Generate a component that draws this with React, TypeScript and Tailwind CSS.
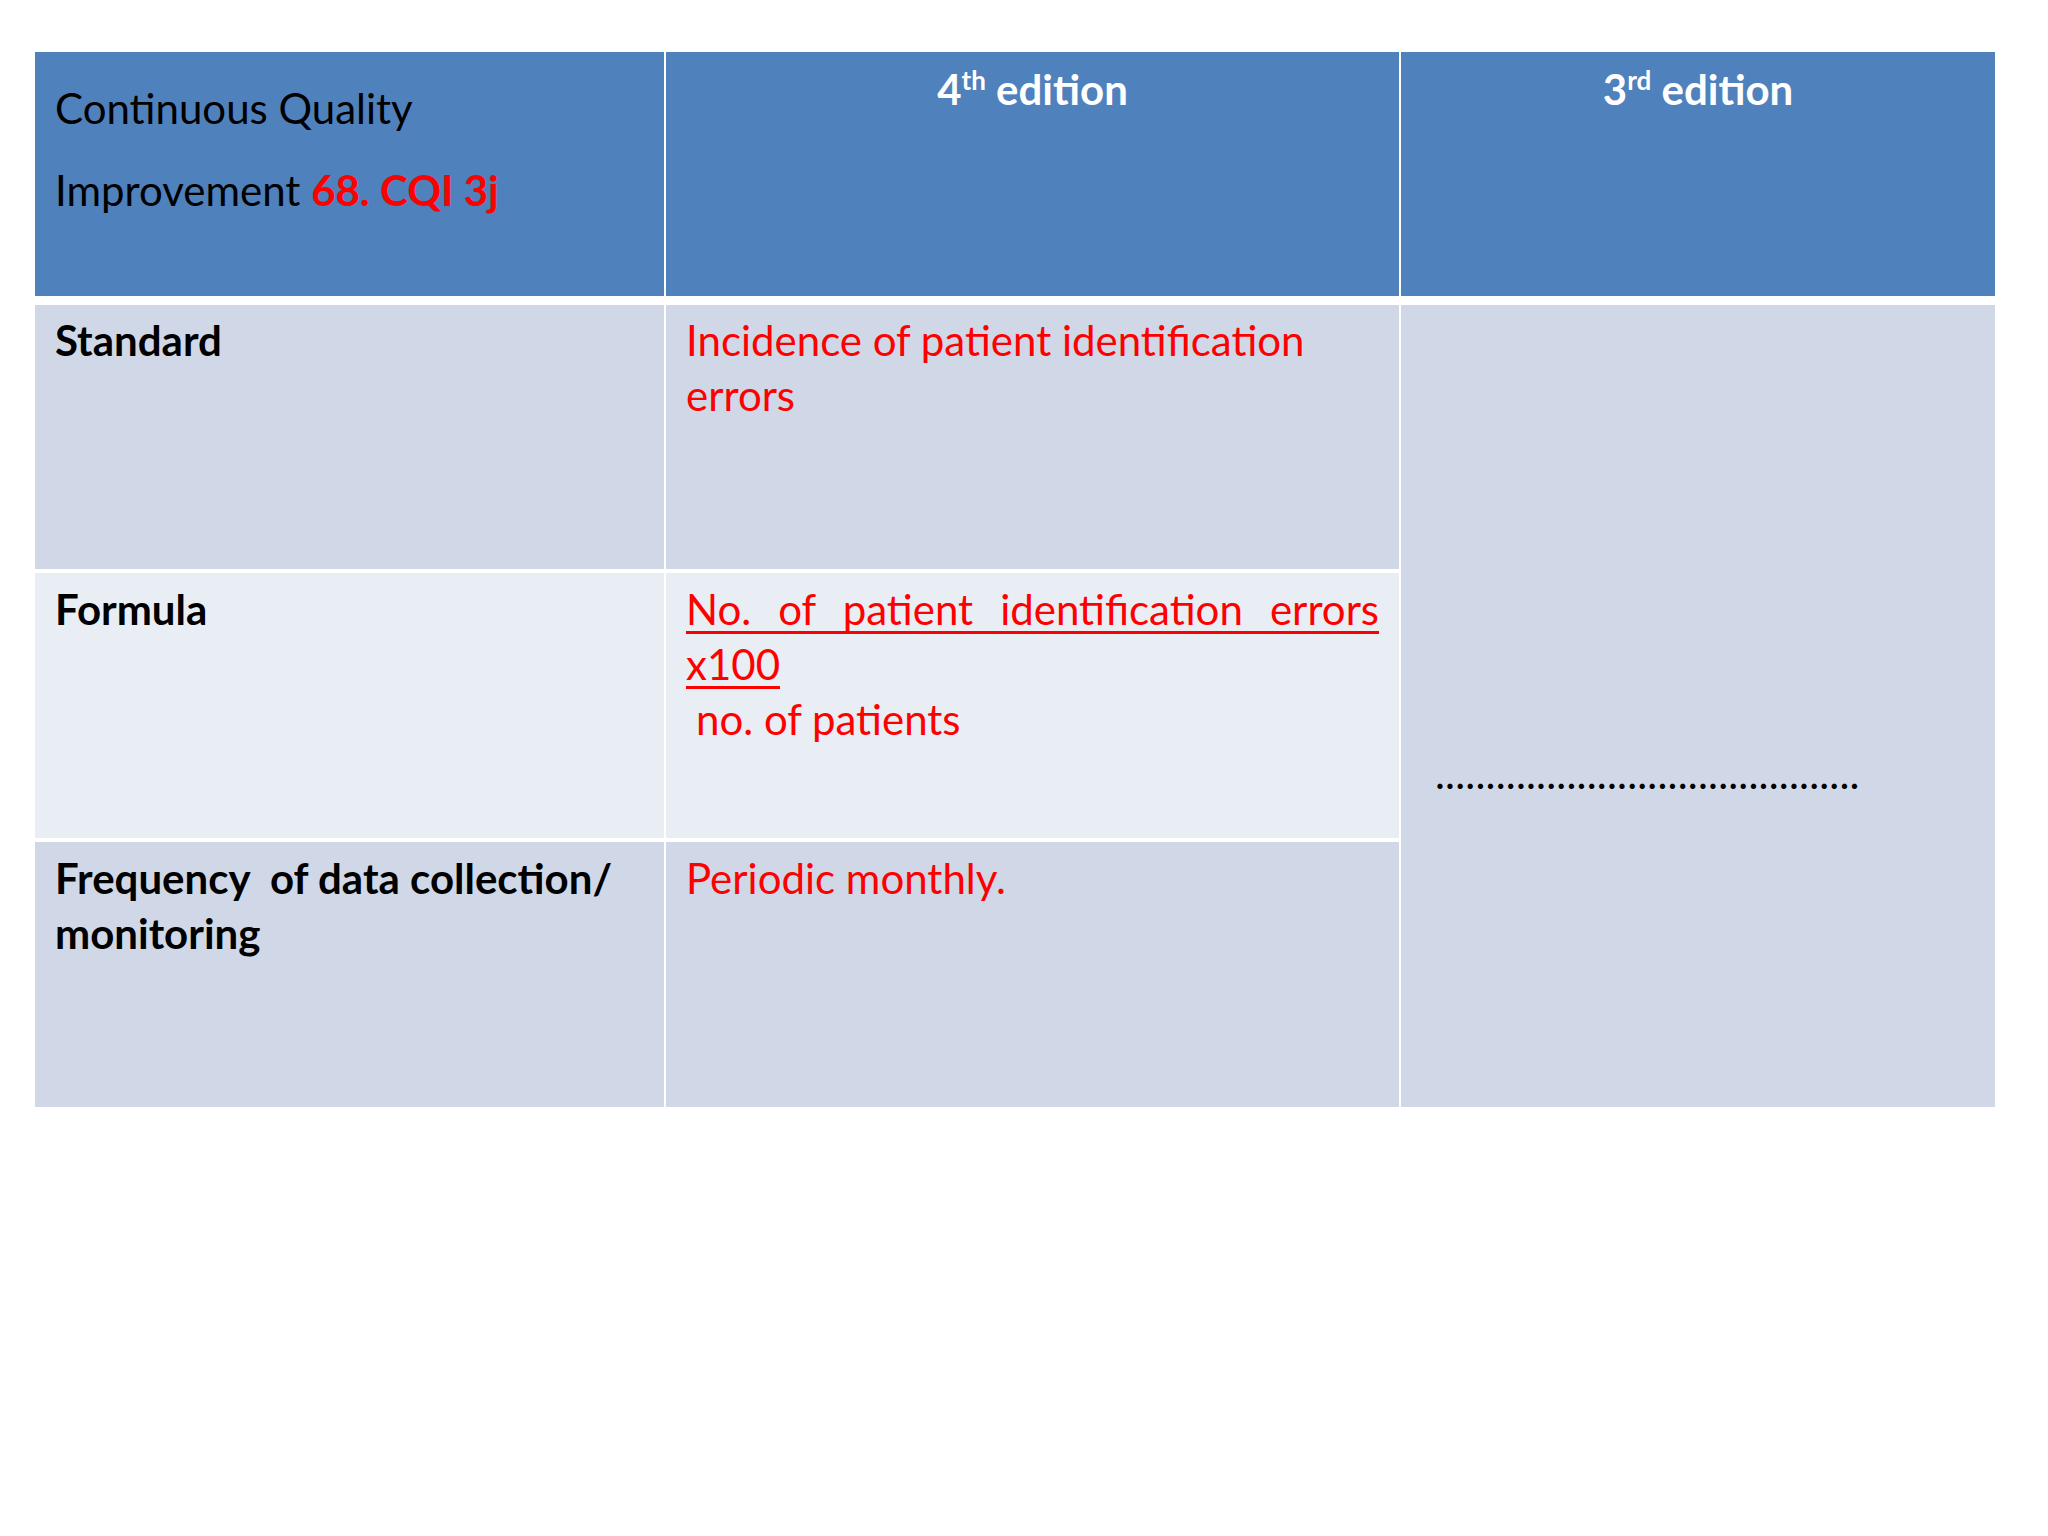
const font = { fontFamily: 'Lato, "Open Sans", sans-serif' };

const App = () => {
  return (
    <div className="w-[2048px] h-[1536px] bg-white pt-[52px] pl-[35px]" style={font}>
      <div className="w-[1960px] flex flex-col">
        {/* HEADER ROW */}
        <div className="grid grid-cols-[629px_733px_594px] gap-x-[2px] bg-white">
          <div className="h-[244px] bg-[#4f81bd] px-[20px] pt-[29px] text-[42px] leading-[55px] text-black">
            <p>Continuous Quality</p>
            <p className="mt-[27px]">
              Improvement <span className="font-bold text-[#ff0000]">68. CQI 3j</span>
            </p>
          </div>
          <div className="h-[244px] bg-[#4f81bd] px-[20px] pt-[10px] text-center text-[42px] leading-[55px] font-bold text-white">
            4<sup className="text-[26px] relative top-[-15px]">th</sup> edition
          </div>
          <div className="h-[244px] bg-[#4f81bd] px-[20px] pt-[10px] text-center text-[42px] leading-[55px] font-bold text-white">
            3<sup className="text-[26px] relative top-[-15px]">rd</sup> edition
          </div>
        </div>

        <div className="h-[9px]" />

        {/* BODY */}
        <div className="grid grid-cols-[629px_733px_594px] grid-rows-[264px_265px_265px] gap-x-[2px] gap-y-[4px] text-[42px] leading-[55px]">
          <div className="bg-[#d0d8e8] px-[20px] pt-[8px] font-bold text-black">Standard</div>
          <div className="bg-[#d0d8e8] px-[20px] pt-[8px] text-[#ff0000]">
            Incidence of patient identification
            <br />
            errors
          </div>
          <div className="row-span-3 bg-[#d0d8e8] pl-[34px] pt-[441px] text-black">
            <span className="whitespace-nowrap tracking-[0.2px]">
              ..........................................
            </span>
          </div>

          <div className="bg-[#e9edf4] px-[20px] pt-[9px] font-bold text-black">Formula</div>
          <div className="bg-[#e9edf4] px-[20px] pt-[9px] text-[#ff0000]">
            <span className="block underline decoration-[3px] underline-offset-[6px] [text-decoration-skip-ink:none] [text-align-last:justify] text-justify">
              No. of patient identification errors
            </span>
            <span className="underline decoration-[3px] underline-offset-[6px] [text-decoration-skip-ink:none]">x100</span>
            <span className="block pl-[10px]">no. of patients</span>
          </div>

          <div className="bg-[#d0d8e8] px-[20px] pt-[9px] font-bold text-black">
            <span className="whitespace-pre">Frequency  of data collection/</span>
            <br />
            monitoring
          </div>
          <div className="bg-[#d0d8e8] px-[20px] pt-[9px] text-[#ff0000]">Periodic monthly.</div>
        </div>
      </div>
    </div>
  );
};

export default App;
